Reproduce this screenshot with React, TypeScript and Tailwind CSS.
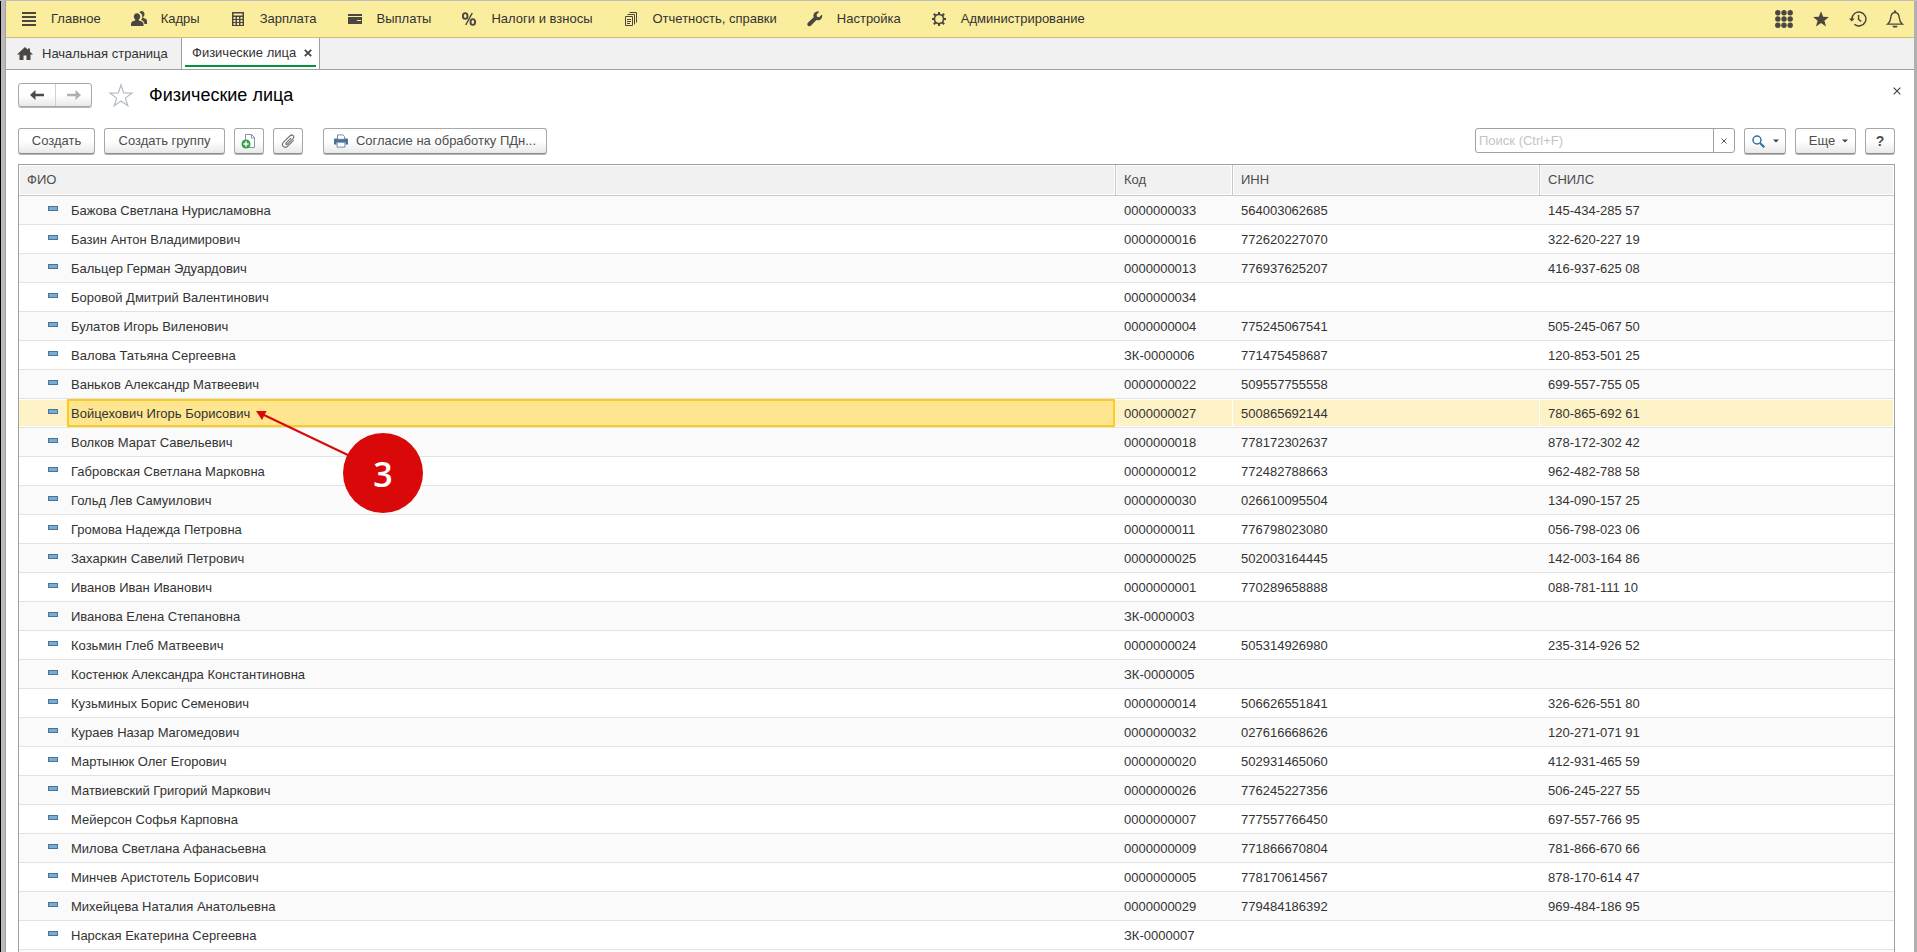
import React from "react";

type Person = { name: string; code: string; inn?: string; snils?: string };

const people: Person[] = [
  { name: "Бажова Светлана Нурисламовна", code: "0000000033", inn: "564003062685", snils: "145-434-285 57" },
  { name: "Базин Антон Владимирович", code: "0000000016", inn: "772620227070", snils: "322-620-227 19" },
  { name: "Бальцер Герман Эдуардович", code: "0000000013", inn: "776937625207", snils: "416-937-625 08" },
  { name: "Боровой Дмитрий Валентинович", code: "0000000034" },
  { name: "Булатов Игорь Виленович", code: "0000000004", inn: "775245067541", snils: "505-245-067 50" },
  { name: "Валова Татьяна Сергеевна", code: "ЗК-0000006", inn: "771475458687", snils: "120-853-501 25" },
  { name: "Ваньков Александр Матвеевич", code: "0000000022", inn: "509557755558", snils: "699-557-755 05" },
  { name: "Войцехович Игорь Борисович", code: "0000000027", inn: "500865692144", snils: "780-865-692 61" },
  { name: "Волков Марат Савельевич", code: "0000000018", inn: "778172302637", snils: "878-172-302 42" },
  { name: "Габровская Светлана Марковна", code: "0000000012", inn: "772482788663", snils: "962-482-788 58" },
  { name: "Гольд Лев Самуилович", code: "0000000030", inn: "026610095504", snils: "134-090-157 25" },
  { name: "Громова Надежда Петровна", code: "0000000011", inn: "776798023080", snils: "056-798-023 06" },
  { name: "Захаркин Савелий Петрович", code: "0000000025", inn: "502003164445", snils: "142-003-164 86" },
  { name: "Иванов Иван Иванович", code: "0000000001", inn: "770289658888", snils: "088-781-111 10" },
  { name: "Иванова Елена Степановна", code: "ЗК-0000003" },
  { name: "Козьмин Глеб Матвеевич", code: "0000000024", inn: "505314926980", snils: "235-314-926 52" },
  { name: "Костенюк Александра Константиновна", code: "ЗК-0000005" },
  { name: "Кузьминых Борис Семенович", code: "0000000014", inn: "506626551841", snils: "326-626-551 80" },
  { name: "Кураев Назар Магомедович", code: "0000000032", inn: "027616668626", snils: "120-271-071 91" },
  { name: "Мартынюк Олег Егорович", code: "0000000020", inn: "502931465060", snils: "412-931-465 59" },
  { name: "Матвиевский Григорий Маркович", code: "0000000026", inn: "776245227356", snils: "506-245-227 55" },
  { name: "Мейерсон Софья Карповна", code: "0000000007", inn: "777557766450", snils: "697-557-766 95" },
  { name: "Милова Светлана Афанасьевна", code: "0000000009", inn: "771866670804", snils: "781-866-670 66" },
  { name: "Минчев Аристотель Борисович", code: "0000000005", inn: "778170614567", snils: "878-170-614 47" },
  { name: "Михейцева Наталия Анатольевна", code: "0000000029", inn: "779484186392", snils: "969-484-186 95" },
  { name: "Нарская Екатерина Сергеевна", code: "ЗК-0000007" },
];

const selectedCode = "0000000027";

function Icon({ children, className = "size-4" }: { children: React.ReactNode; className?: string }) {
  return (
    <svg viewBox="0 0 16 16" className={`shrink-0 ${className}`} aria-hidden="true">
      {children}
    </svg>
  );
}

const ink = "#4a4640";

const MenuIcon = () => (
  <Icon>
    <path fill={ink} d="M1 1h14v2H1zM1 5h14v2H1zM1 9h14v2H1zM1 13h14v2H1z" />
  </Icon>
);
const PeopleIcon = () => (
  <Icon>
    <path fill={ink} d="M10.5 0a3 3.2 0 0 1 1.900 5.700c-.3.3-.3 1 0 1.400C14.500 7.800 16 8.300 16 10v3h-2.500c-.2-2.200-1.700-3.300-3.400-3.900.9-1 1.200-2.200 1.200-3.600 0-1.800-1.200-3.400-2.900-3.900C8.900.5 9.600 0 10.500 0z" />
    <path fill={ink} d="M6 2.200c1.900 0 3.200 1.400 3.200 3.300 0 1.400-.6 2.500-1.400 3.100v1c1.900.7 4.700 1 4.700 3.400v2H0v-2c0-2.400 2.100-2.700 4.200-3.400v-1c-.8-.6-1.400-1.700-1.400-3.100 0-1.900 1.300-3.300 3.200-3.300z" />
  </Icon>
);
const CalcIcon = () => (
  <Icon>
    <path fill={ink} fillRule="evenodd" d="M2 1h12v14H2zM3.500 2.500v2h9v-2zM3.500 6v2h2V6zM7 6v2h2V6zM10.500 6v2h2V6zM3.500 9v2h2V9zM7 9v2h2V9zM10.500 9v2h2V9zM3.500 12v2h2v-2zM7 12v2h2v-2zM10.500 12v2h2v-2z" />
  </Icon>
);
const CardIcon = () => (
  <Icon>
    <path fill={ink} fillRule="evenodd" d="M1 3h14v2H1zM1 6h14v7H1zM10 9v1h4V9z" />
  </Icon>
);
const PercentIcon = () => (
  <Icon>
    <g fill="none" stroke={ink} strokeWidth="1.900">
      <ellipse cx="4.200" cy="5" rx="2.300" ry="2.900" />
      <ellipse cx="11.800" cy="11" rx="2.300" ry="2.900" />
      <path d="M11.300 2 4.700 14" strokeWidth="1.500" />
    </g>
  </Icon>
);
const ReportsIcon = () => (
  <Icon>
    <g fill="none" stroke={ink}>
      <path d="M2.500 5.500h7v9h-7zM4.500 3.500h7v10M6.500 1.500h7v10" />
      <path d="M4 8.500h4M4 10.500h4M4 12.500h3" />
    </g>
  </Icon>
);
const WrenchIcon = () => (
  <Icon>
    <path fill={ink} d="M15 3.500 12.200 6.200 10 5.800 9.600 3.600l2.700-2.800C10.300.2 8.400.7 7.300 2.100 6.300 3.400 6.200 4.900 6.700 6.200L1.100 11.500c-1 1-1 2.400-.2 3.200.8.800 2.200.8 3.200-.2L9.400 9.100c1.400.5 3.100.3 4.400-.9 1.300-1.200 1.700-3.100 1.200-4.700z" />
  </Icon>
);
const GearIcon = () => (
  <Icon>
    <circle cx="8" cy="8" r="4.600" fill="none" stroke={ink} strokeWidth="1.700" />
    <path stroke={ink} strokeWidth="2" d="M8 1v2.500M8 12.500V15M1 8h2.500M12.500 8H15M2.800 2.800l2 2M11.200 11.200l2 2M2.800 13.200l2-2M11.200 4.800l2-2" />
  </Icon>
);
const HomeIcon = () => (
  <Icon>
    <path fill={ink} d="M8 1 0 8.500h2.500V14h4v-4.500h3V14h4V8.500H16L13 5.700V2.500h-2v1.300z" />
  </Icon>
);

const sections = [
  { label: "Главное", icon: <MenuIcon /> },
  { label: "Кадры", icon: <PeopleIcon /> },
  { label: "Зарплата", icon: <CalcIcon /> },
  { label: "Выплаты", icon: <CardIcon /> },
  { label: "Налоги и взносы", icon: <PercentIcon /> },
  { label: "Отчетность, справки", icon: <ReportsIcon /> },
  { label: "Настройка", icon: <WrenchIcon /> },
  { label: "Администрирование", icon: <GearIcon /> },
];

const buttonLook =
  "flex h-[26px] items-center justify-center rounded-[3px] border border-[#a8a8a8] border-b-[#8c8c8c] bg-linear-to-b from-white from-50% to-[#e9e9e9] text-[#4d4d4d] shadow-[0_1px_0_#b5b5b5]";

function Caret() {
  return (
    <svg viewBox="0 0 6 4" className="h-1 w-1.5" aria-hidden="true">
      <path d="M0 .5h6L3 3.500z" fill="#444" />
    </svg>
  );
}

function Cross({ className }: { className: string }) {
  return (
    <svg viewBox="0 0 8 8" className={className} aria-hidden="true">
      <path d="M.7.7 7.300 7.300M7.300.7.7 7.300" stroke="currentColor" strokeWidth="1.200" />
    </svg>
  );
}

function SectionBar() {
  return (
    <header className="flex h-[37px] shrink-0 items-center justify-between border-b border-[#cdbf72] bg-[#fbed9e] pr-2.5 pl-[15px]">
      <nav className="flex items-center gap-[30px]">
        {sections.map((s) => (
          <a key={s.label} href="#" className="flex items-center gap-3.5 whitespace-nowrap">
            {s.icon}
            {s.label}
          </a>
        ))}
      </nav>
      <div className="flex items-center gap-[19px]">
        <button type="button" aria-label="Все функции">
          <Icon className="size-[18px]">
            <g fill={ink}>
              {[2.5, 8, 13.5].map((y) => [2.5, 8, 13.5].map((x) => <circle key={`${x}-${y}`} cx={x} cy={y} r="2.400" />))}
            </g>
          </Icon>
        </button>
        <button type="button" aria-label="Избранное">
          <Icon className="size-[18px]">
            <path fill={ink} d="m8 1 1.900 5.100 5.100.1-4 3.300 1.500 5.100L8 11.600l-4.500 3 1.500-5.100-4-3.300 5.100-.1z" />
          </Icon>
        </button>
        <button type="button" aria-label="История">
          <Icon className="size-[18px]">
            <path fill="none" stroke={ink} strokeWidth="1.300" d="M2.600 8.500V8a6.200 6.200 0 1 1 2.200 4.700M8.500 4.500V8.300l2.300 1.900" />
            <path fill={ink} d="M0 7.500h5L2.500 10.300z" />
          </Icon>
        </button>
        <button type="button" aria-label="Уведомления">
          <Icon className="size-[18px]">
            <path fill="none" stroke={ink} strokeWidth="1.200" d="M1.500 12.500c2-1.500 2.500-3 2.700-5.500C4.400 4.500 5 2.200 8 2.200s3.600 2.300 3.800 4.800c.2 2.500.7 4 2.700 5.500z" />
            <path fill={ink} d="M7 .5h2v2H7zM5.500 14h5l-1 1.500h-3z" />
          </Icon>
        </button>
      </div>
    </header>
  );
}

function TabBar() {
  return (
    <div className="flex h-8 shrink-0 border-b border-[#a0a0a0] bg-[#f1f1f1]">
      <button type="button" className="flex w-[175px] items-center gap-[9px] pl-[11px] whitespace-nowrap">
        <HomeIcon />
        Начальная страница
      </button>
      <div className="flex w-[139px] border-x border-[#a0a0a0] bg-white px-[3px] pb-0.5">
        <div className="flex flex-1 items-center justify-between border-b-2 border-[#00933b] pt-0.5 pr-1 pl-[7px]">
          <button type="button" className="whitespace-nowrap">Физические лица</button>
          <button type="button" aria-label="Закрыть вкладку">
            <svg viewBox="0 0 8 8" className="size-2" aria-hidden="true">
              <path d="M.8.8 7.200 7.200M7.200.8.8 7.200" stroke="#444" strokeWidth="1.800" />
            </svg>
          </button>
        </div>
      </div>
    </div>
  );
}

function TitleRow() {
  return (
    <div className="flex items-center">
      <div className="flex h-6 rounded-[3px] border border-[#a8a8a8] bg-linear-to-b from-white from-50% to-[#e9e9e9] shadow-[0_1px_0_#b5b5b5]">
        <button type="button" aria-label="Назад" className="flex w-[37px] items-center justify-center border-r border-[#cfcfcf]">
          <svg viewBox="0 0 14 10" className="h-2.5 w-3.5" aria-hidden="true">
            <path fill="#4a4a4a" d="M0 5 5.500 0v3.700H14v2.600H5.500V10z" />
          </svg>
        </button>
        <button type="button" aria-label="Вперед" className="flex w-[35px] items-center justify-center">
          <svg viewBox="0 0 14 10" className="h-2.5 w-3.5" aria-hidden="true">
            <path fill="#b0b0b0" d="M14 5 8.500 0v3.700H0v2.600h8.500V10z" />
          </svg>
        </button>
      </div>
      <button type="button" aria-label="Добавить в избранное" className="ml-4">
        <svg viewBox="0 0 26 24" className="h-6 w-[26px]" aria-hidden="true">
          <path fill="#fff" stroke="#b4bac4" strokeWidth="1.200" d="m13 2 2.700 8 8.300.1-6.700 5 2.500 7.600L13 18l-6.800 4.700 2.500-7.600-6.700-5 8.300-.1z" />
        </svg>
      </button>
      <h1 className="ml-[15px] text-lg leading-6 text-black">Физические лица</h1>
      <button type="button" aria-label="Закрыть" className="-mr-1.5 mb-2 ml-auto text-[#444]">
        <Cross className="size-2" />
      </button>
    </div>
  );
}

function Toolbar() {
  return (
    <div className="flex items-center justify-between">
      <div className="flex gap-[9px]">
        <button type="button" className={`${buttonLook} w-[77px]`}>Создать</button>
        <button type="button" className={`${buttonLook} w-[121px]`}>Создать группу</button>
        <button type="button" aria-label="Создать копированием" className={`${buttonLook} w-[30px]`}>
          <Icon>
            <path fill="#fff" stroke="#8294a6" d="M4.500 1.500h6l3 3v10h-9z" />
            <path fill="none" stroke="#8294a6" d="M10.500 1.500v3.500h3" />
            <circle cx="5" cy="11" r="4.500" fill="#2fa23a" />
            <path stroke="#fff" strokeWidth="1.500" d="M5 8.300v5.400M2.300 11h5.400" />
          </Icon>
        </button>
        <button type="button" aria-label="Присоединенные файлы" className={`${buttonLook} w-[30px]`}>
          <Icon>
            <path
              fill="none"
              stroke="#777"
              strokeWidth="1.200"
              strokeLinecap="round"
              d="M10.800 5.300 6.200 9.900c-.9 1 .2 2.100 1.200 1.200l5.600-5.500c2-2.200-.7-4.800-2.900-2.800L3.500 9.100c-3 3.200 1 7 4 4.200l5.800-5.700"
            />
          </Icon>
        </button>
        <button type="button" className={`${buttonLook} ml-[11px] w-[224px] gap-2 whitespace-nowrap`}>
          <Icon className="size-3.5">
            <path fill="#4a7197" d="M1 5h14a1 1 0 0 1 1 1v6h-3V9H3v3H0V6a1 1 0 0 1 1-1z" />
            <path fill="#fff" stroke="#5f7f9f" d="M4 6V1h6l2 2v3zM3.500 9.500h9v5.500h-9z" />
          </Icon>
          Согласие на обработку ПДн...
        </button>
      </div>
      <div className="flex gap-[9px]">
        <div className="flex h-[25px] w-[260px] rounded-[3px] border border-[#a0a0a0] bg-white">
          <input
            type="text"
            aria-label="Поиск"
            placeholder="Поиск (Ctrl+F)"
            className="min-w-0 flex-1 px-[3px] outline-none placeholder:text-[#c4c4c4]"
          />
          <button type="button" aria-label="Очистить поиск" className="flex w-[21px] items-center justify-center border-l border-[#a0a0a0] text-[#444]">
            <Cross className="size-1.5" />
          </button>
        </div>
        <button type="button" aria-label="Найти" className={`${buttonLook} w-[42px] gap-2`}>
          <svg viewBox="0 0 13 13" className="size-[13px]" aria-hidden="true">
            <circle cx="5" cy="5" r="4" fill="none" stroke="#2c74ab" strokeWidth="1.500" />
            <path d="m8 8 4.300 4.300" stroke="#2c74ab" strokeWidth="2.200" />
          </svg>
          <Caret />
        </button>
        <button type="button" className={`${buttonLook} w-[61px] gap-[7px] pl-1.5`}>
          Еще
          <Caret />
        </button>
        <button type="button" aria-label="Справка" className={`${buttonLook} w-[30px] text-sm font-bold`}>?</button>
      </div>
    </div>
  );
}

function Callout() {
  return (
    <div className="pointer-events-none absolute top-2.5 left-[187px] z-10">
      <svg viewBox="0 0 168 104" className="h-[104px] w-[168px]" aria-hidden="true">
        <path d="M8 4 96 46" stroke="#d90909" strokeWidth="2" />
        <path d="M0 0h10.500L6 9z" fill="#d90909" />
        <circle cx="127" cy="62" r="40" fill="#d90909" />
      </svg>
      <span className="absolute top-[43px] left-[87px] w-20 text-center font-['Open_Sans',sans-serif] text-[34px] leading-10 font-semibold text-white">3</span>
    </div>
  );
}

function PeopleTable() {
  return (
    <table className="w-full table-fixed border-separate border-spacing-0 text-left">
      <colgroup>
        <col />
        <col className="w-[117px]" />
        <col className="w-[307px]" />
        <col className="w-[354px]" />
      </colgroup>
      <thead>
        <tr className="h-[31px] bg-[#f1f1f1] text-[#4d4d4d]">
          {["ФИО", "Код", "ИНН", "СНИЛС"].map((title) => (
            <th
              key={title}
              scope="col"
              className="border-r border-b border-[#c8c8c8] px-2 font-normal shadow-[inset_0_0_0_1px_#fff] last:border-r-0"
            >
              {title}
            </th>
          ))}
        </tr>
      </thead>
      <tbody>
        {people.map((p) => {
          const selected = p.code === selectedCode;
          const cell = selected
            ? "border-b border-[#e2e2e2] bg-[#fdf1c6] px-2 pt-px shadow-[inset_0_1px_0_#fff,inset_0_-1px_0_#fff,inset_-1px_0_0_#fff]"
            : "border-b border-[#e2e2e2] px-2 pt-px";
          return (
            <tr key={p.code} aria-selected={selected} className="h-[29px] odd:bg-[#fafafa]">
              <td
                className={
                  selected
                    ? "border-b border-[#e2e2e2] bg-[#fdf1c6] p-0 shadow-[inset_0_1px_0_#fff,inset_0_-1px_0_#fff]"
                    : "border-b border-[#e2e2e2] p-0"
                }
              >
                <div className="flex h-7 items-center pr-px pl-[29px]">
                  <span className="mb-[3px] h-[5px] w-2.5 shrink-0 border border-[#4a7496] bg-[#78acd4]" />
                  <span
                    className={
                      selected
                        ? "relative ml-[9px] flex h-7 flex-1 items-center border-2 border-[#fccb23] bg-[#fee590] pt-px pl-0.5"
                        : "ml-[13px] pt-px"
                    }
                  >
                    {p.name}
                    {selected && <Callout />}
                  </span>
                </div>
              </td>
              <td className={cell}>{p.code}</td>
              <td className={cell}>{p.inn}</td>
              <td className={cell}>{p.snils}</td>
            </tr>
          );
        })}
      </tbody>
    </table>
  );
}

export default function App() {
  return (
    <div className="flex h-screen overflow-hidden border-t border-[#bdbdbd] bg-white font-['Liberation_Sans',Arial,sans-serif] text-[13px] leading-4 text-[#333]">
      <div className="w-1.5 shrink-0 border-r border-l border-r-[#a39fa0] border-l-black bg-[#bdb9ba]" />
      <div className="flex min-w-0 flex-1 flex-col">
        <SectionBar />
        <TabBar />
        <main className="flex min-h-0 flex-1 flex-col gap-[21px] pt-[13px] pr-[19px] pl-3">
          <TitleRow />
          <Toolbar />
          <div className="-mt-[11px] min-h-0 flex-1 overflow-hidden border border-b-0 border-[#a0a0a0] bg-[#fafafa]">
            <div className="bg-white">
              <PeopleTable />
            </div>
          </div>
        </main>
      </div>
      <div className="w-[3px] shrink-0 bg-[#b0b0b2]" />
    </div>
  );
}
